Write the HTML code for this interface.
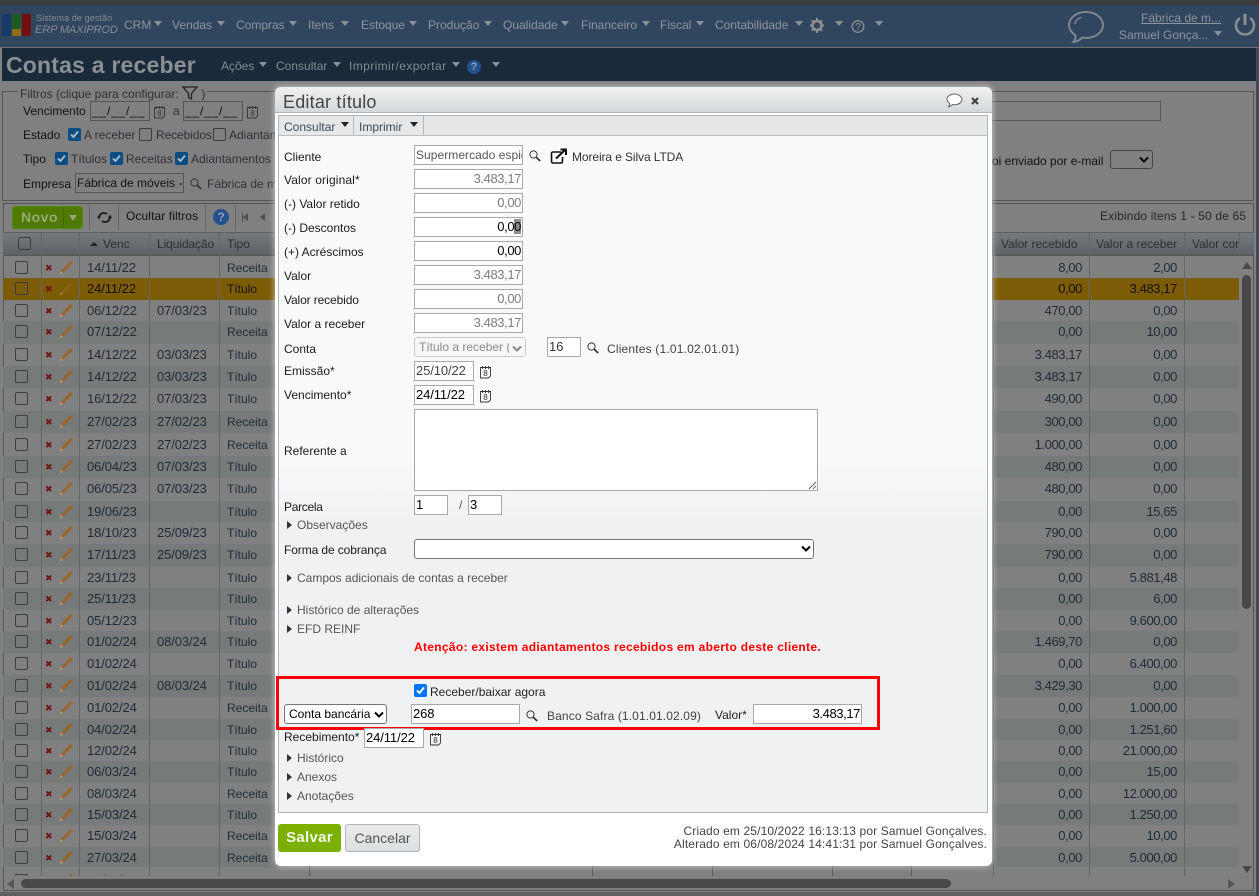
<!DOCTYPE html>
<html lang="pt-BR">
<head>
<meta charset="utf-8">
<title>Contas a receber</title>
<style>
html,body{margin:0;padding:0;width:1259px;height:896px;overflow:hidden;background:#808080}
body{position:relative;font:12px/14px "Liberation Sans",Arial,sans-serif;color:#1d2329}
.a,.a *{box-sizing:border-box}
.a{position:absolute}
.t{position:absolute;white-space:nowrap}
.m{position:absolute;top:18px;color:#8e969e;white-space:nowrap}
.tri{position:absolute;top:21px;width:0;height:0;border-left:4.5px solid transparent;border-right:4.5px solid transparent;border-top:5px solid #8a9197}
.tb{position:absolute;width:0;height:0;border-left:4.5px solid transparent;border-right:4.5px solid transparent;border-top:5px solid #222}
.dk{box-sizing:border-box;border:1px solid #555;background:transparent;position:absolute}
.ck{position:absolute;width:13px;height:13px;border-radius:2px;background:#0a4d85;color:#8f9a9f}
.un{box-sizing:border-box;position:absolute;width:13px;height:13px;border-radius:2px;border:1px solid #3c3c3c}
#rows{position:absolute;left:3px;top:256px;width:1236px;height:620px;overflow:hidden}
.r{position:absolute;left:0;width:1236px;height:22px;color:#1f2a38}
.r.e{background:#767a78}
.r.h{background:#7d5c07;color:#15110a}
.r.h svg{opacity:.55}
.r i{box-sizing:border-box;position:absolute;left:12px;top:4px;width:13px;height:13px;border:1px solid #3e3e3e;border-radius:2px}
.r b{position:absolute;left:42px;top:5px;color:#701418;font:bold 9px/14px "DejaVu Sans",sans-serif}
.r svg{position:absolute;left:56px;top:3px;width:14px;height:15px}
.r s{position:absolute;top:4px;text-decoration:none;white-space:nowrap}
.d,.l{font-size:13px;letter-spacing:-.1px}
.d{left:84px}.l{left:154px}.p{left:224px}
.v,.w{font-size:13px;letter-spacing:-.4px;text-align:right}
.v{left:979px;width:100px}
.w{left:1074px;width:100px}
.vl{position:absolute;top:233px;width:1px;height:643px;background:#636668}
.vs{position:absolute;top:866px;width:1px;height:10px;background:#5a5c5e}
.hd{position:absolute;top:237px;color:#2a2e33;white-space:nowrap}
#dlg{position:absolute;left:275px;top:87px;width:717px;height:779px;background:#fff;border-radius:6px;box-shadow:0 0 6px 1px rgba(225,225,225,.65)}
.f{box-sizing:border-box;position:absolute;height:20px;border:1px solid #a9a9a9;background:#fff;font:12px/18px "Liberation Sans",Arial,sans-serif;padding:0 1px;color:#000;white-space:nowrap;overflow:hidden}
.g{font-size:13px;letter-spacing:-.1px}
.n{text-align:right;color:#7d7d7d;font-size:13px;letter-spacing:-.4px}
.nb{text-align:right;color:#000;font-size:13px;letter-spacing:-.4px}
.lb{position:absolute;left:284px;white-space:nowrap;color:#1a1a1a}
.ar{position:absolute;width:0;height:0;border-top:4px solid transparent;border-bottom:4px solid transparent;border-left:5px solid #333}
.ex{position:absolute;left:297px;white-space:nowrap;color:#555}
.sel{box-sizing:border-box;position:absolute;height:20px;border:1px solid #767676;border-radius:3px;background:#fff;color:#000;padding:2px 4px;white-space:nowrap;overflow:hidden}
</style>
</head>
<body>
<svg width="0" height="0" style="position:absolute">
<symbol id="pen" viewBox="0 0 14 15"><path d="M.8 14.300L2 11 11.500 1l2.200 2L4 13z" fill="#9c6428"/><path d="M.8 14.300L2 11l2 2z" fill="#b3a288"/></symbol>
<symbol id="cal" viewBox="0 0 13 14"><path d="M1.500 2.500h10v8.500l-2 2h-8z" fill="none" stroke="#333" stroke-width=".9"/><path d="M3.500 1v3M6.500 1v3M9.500 1v3" stroke="#333" stroke-width=".9"/><text x="6.500" y="11" font-size="8" text-anchor="middle" fill="#333" font-family="Liberation Sans">8</text></symbol>
<symbol id="mag" viewBox="0 0 12 12"><circle cx="4.500" cy="4.500" r="3.600" fill="none" stroke="#333" stroke-width="1"/><path d="M7.200 7.200l4 3.800" stroke="#333" stroke-width="1.700"/></symbol>
<symbol id="chk" viewBox="0 0 13 13"><path d="M3 6.500l2.500 2.500 4.500-5.500" fill="none" stroke="#a9b4bb" stroke-width="2"/></symbol>
<symbol id="chev" viewBox="0 0 10 7"><path d="M1 1.500l4 4 4-4" fill="none" stroke="#000" stroke-width="2"/></symbol>
</svg>

<!-- top bars -->
<div class="a" style="left:0;top:0;width:1259px;height:5px;background:#3c3c3c"></div>
<div class="a" style="left:0;top:5px;width:1259px;height:42px;background:#30455e"></div>
<div class="a" style="left:2px;top:14px;width:9px;height:22px;background:#173a68;border-radius:2px 0 0 2px"></div>
<div class="a" style="left:12px;top:14px;width:9px;height:15px;background:#1e5a22"></div>
<div class="a" style="left:12px;top:29px;width:9px;height:7px;background:#8a6d15"></div>
<div class="a" style="left:22px;top:14px;width:9px;height:22px;background:#701010;border-radius:0 2px 2px 0"></div>
<div class="t" style="left:36px;top:11px;font-size:9px;letter-spacing:.1px;color:#858c93">Sistema de gestão</div>
<div class="t" style="left:35px;top:23px;font-size:11px;font-style:italic;color:#858c93;letter-spacing:-.1px">ERP MAXIPROD</div>
<div class="m" style="left:124px">CRM</div><div class="tri" style="left:154px"></div>
<div class="m" style="left:172px">Vendas</div><div class="tri" style="left:217px"></div>
<div class="m" style="left:236px">Compras</div><div class="tri" style="left:289px"></div>
<div class="m" style="left:308px">Itens</div><div class="tri" style="left:341px"></div>
<div class="m" style="left:361px">Estoque</div><div class="tri" style="left:409px"></div>
<div class="m" style="left:428px">Produção</div><div class="tri" style="left:484px"></div>
<div class="m" style="left:503px">Qualidade</div><div class="tri" style="left:561px"></div>
<div class="m" style="left:581px">Financeiro</div><div class="tri" style="left:642px"></div>
<div class="m" style="left:660px">Fiscal</div><div class="tri" style="left:696px"></div>
<div class="m" style="left:715px">Contabilidade</div><div class="tri" style="left:795px"></div>
<svg class="a" style="left:809px;top:17px" width="16" height="17" viewBox="0 0 16 17"><circle cx="8" cy="8.500" r="4.500" fill="none" stroke="#8f8f8f" stroke-width="2.500"/><path d="M8 1v3M8 13v3M1 8.500h3M12 8.500h3M2.800 3.300l2.200 2.200M11 11.500l2.200 2.200M13.200 3.300L11 5.500M5 11.500l-2.200 2.200" stroke="#8f8f8f" stroke-width="2"/></svg>
<div class="tri" style="left:835px"></div>
<svg class="a" style="left:851px;top:19px" width="14" height="15" viewBox="0 0 14 15"><circle cx="7" cy="7.500" r="5.800" fill="none" stroke="#8f8f8f" stroke-width="1.300"/><text x="7" y="11" font-size="10" text-anchor="middle" fill="#8f8f8f" font-family="Liberation Sans">?</text></svg>
<div class="tri" style="left:875px"></div>
<svg class="a" style="left:1067px;top:10px" width="38" height="34" viewBox="0 0 38 34"><path d="M19 2C9.500 2 2 8 2 15c0 4.500 3 8 6.500 10.500C9 28 8 30 6.500 32c4-.5 7-2.500 9-4.500 1 .2 2.500.5 3.500.5 9.500 0 17-6 17-13S28.500 2 19 2z" fill="none" stroke="#7e868e" stroke-width="2"/><path d="M8 14c0-3 3-5.500 6-6.500" fill="none" stroke="#7e868e" stroke-width="1.500"/></svg>
<div class="t" style="left:1141px;top:11px;color:#8e969e;text-decoration:underline">Fábrica de m...</div>
<div class="t" style="left:1119px;top:28px;color:#8e969e">Samuel Gonça...</div>
<div class="tri" style="left:1214px;top:31px"></div>
<svg class="a" style="left:1234px;top:12px" width="22" height="25" viewBox="0 0 22 25"><path d="M6 6a9 9 0 1 0 10 0" fill="none" stroke="#8a8f94" stroke-width="2.500"/><path d="M11 2v11" stroke="#8a8f94" stroke-width="3"/></svg>

<div class="a" style="left:0;top:47px;width:1259px;height:1px;background:#6f6f6f"></div>
<div class="a" style="left:2px;top:48px;width:1254px;height:33px;background:#1a2a3a"></div>
<div class="t" style="left:6px;top:52px;font:bold 23px/26px 'Liberation Sans',Arial,sans-serif;letter-spacing:.2px;color:#8a8f94">Contas a receber</div>
<div class="t" style="left:221px;top:59px;color:#858c93">Ações</div><div class="tri" style="left:259px;top:62px"></div>
<div class="t" style="left:276px;top:59px;color:#858c93">Consultar</div><div class="tri" style="left:333px;top:62px"></div>
<div class="t" style="left:349px;top:59px;letter-spacing:.4px;color:#858c93">Imprimir/exportar</div><div class="tri" style="left:452px;top:62px"></div>
<div class="a" style="left:467px;top:60px;width:14px;height:14px;border-radius:50%;background:#24508c;color:#8fa5c0;text-align:center;font:bold 11px/14px 'Liberation Sans',sans-serif">?</div>
<div class="tri" style="left:492px;top:62px"></div>

<!-- filters -->
<div class="dk" style="left:2px;top:91px;width:1252px;height:110px"></div>
<div class="t" style="left:18px;top:86px;background:#808080;padding:0 2px;color:#2d3136">Filtros (clique para configurar: <svg width="16" height="14" viewBox="0 0 16 14" style="vertical-align:-2px"><path d="M1 1h14L9.500 7.500V13L6.500 11.500v-4z" fill="none" stroke="#222" stroke-width="1.300"/></svg> )</div>
<div class="t" style="left:23px;top:104px;color:#111">Vencimento</div>
<div class="dk" style="left:90px;top:101px;width:60px;height:20px;color:#111;line-height:18px;padding-left:1px;letter-spacing:.8px;white-space:nowrap">__/__/__</div>
<svg class="a" style="left:153px;top:105px" width="13" height="14"><use href="#cal"/></svg>
<div class="t" style="left:173px;top:104px;color:#2d3136">a</div>
<div class="dk" style="left:183px;top:101px;width:60px;height:20px;color:#111;line-height:18px;padding-left:1px;letter-spacing:.8px;white-space:nowrap">__/__/__</div>
<svg class="a" style="left:246px;top:105px" width="13" height="14"><use href="#cal"/></svg>
<div class="dk" style="left:980px;top:101px;width:181px;height:20px"></div>

<div class="t" style="left:23px;top:128px;color:#111">Estado</div>
<div class="ck" style="left:68px;top:128px"><svg width="13" height="13"><use href="#chk"/></svg></div>
<div class="t" style="left:84px;top:128px;color:#2d3136">A receber</div>
<div class="un" style="left:139px;top:128px"></div>
<div class="t" style="left:156px;top:128px;color:#2d3136;letter-spacing:-.1px">Recebidos</div>
<div class="un" style="left:213px;top:128px"></div>
<div class="t" style="left:229px;top:128px;color:#2d3136;width:46px;overflow:hidden">Adiantamentos</div>

<div class="t" style="left:23px;top:152px;color:#111">Tipo</div>
<div class="ck" style="left:55px;top:152px"><svg width="13" height="13"><use href="#chk"/></svg></div>
<div class="t" style="left:71px;top:152px;color:#2d3136">Títulos</div>
<div class="ck" style="left:110px;top:152px"><svg width="13" height="13"><use href="#chk"/></svg></div>
<div class="t" style="left:126px;top:152px;color:#2d3136">Receitas</div>
<div class="ck" style="left:175px;top:152px"><svg width="13" height="13"><use href="#chk"/></svg></div>
<div class="t" style="left:191px;top:152px;color:#2d3136">Adiantamentos</div>

<div class="t" style="left:23px;top:177px;color:#111">Empresa</div>
<div class="dk" style="left:75px;top:173px;width:109px;height:20px;color:#111;line-height:18px;padding-left:1px;overflow:hidden;white-space:nowrap">Fábrica de móveis - </div>
<svg class="a" style="left:190px;top:178px" width="12" height="12"><use href="#mag"/></svg>
<div class="t" style="left:207px;top:177px;color:#2d3136;width:68px;overflow:hidden">Fábrica de móveis</div>
<div class="t" style="left:992px;top:154px;color:#111">oi enviado por e-mail</div>
<div class="dk" style="left:1110px;top:150px;width:43px;height:19px;border-color:#444;border-radius:3px"></div>
<svg class="a" style="left:1139px;top:156px" width="10" height="7"><use href="#chev"/></svg>

<!-- grid toolbar -->
<div class="dk" style="left:3px;top:203px;width:1251px;height:688px"></div>
<div class="a" style="left:12px;top:206px;width:71px;height:23px;background:#4e7a00;border-radius:3px;border:1px solid #5a8a05"></div>
<div class="t" style="left:21px;top:209px;font:bold 14px/17px 'Liberation Sans',sans-serif;color:#99a876;letter-spacing:.5px">Novo</div>
<div class="a" style="left:63px;top:207px;width:1px;height:21px;background:#436600"></div>
<div class="a" style="left:69px;top:215px;width:0;height:0;border-left:4px solid transparent;border-right:4px solid transparent;border-top:6px solid #98a878"></div>
<div class="a" style="left:89px;top:205px;width:1px;height:26px;background:#676767"></div>
<svg class="a" style="left:97px;top:211px" width="15" height="13" viewBox="0 0 15 13"><path d="M2 7C2 4 4 2 7 2c1.500 0 2.500.5 3 1" fill="none" stroke="#1b1b1b" stroke-width="1.700"/><path d="M0 5.500h4L2 8.500z" fill="#1b1b1b"/><path d="M13 6C13 9 11 11 8 11c-1.500 0-2.500-.5-3-1" fill="none" stroke="#1b1b1b" stroke-width="1.700"/><path d="M11 7h4l-2-3.500z" fill="#1b1b1b"/></svg>
<div class="a" style="left:118px;top:205px;width:1px;height:26px;background:#676767"></div>
<div class="t" style="left:126px;top:209px;color:#111;letter-spacing:.1px">Ocultar filtros</div>
<div class="a" style="left:205px;top:205px;width:1px;height:26px;background:#676767"></div>
<div class="a" style="left:213px;top:209px;width:16px;height:16px;border-radius:50%;background:#24508c;color:#8fa5c0;text-align:center;font:bold 12px/16px 'Liberation Sans',sans-serif">?</div>
<div class="a" style="left:235px;top:205px;width:1px;height:26px;background:#676767"></div>
<div class="a" style="left:242px;top:213px;width:1px;height:9px;background:#4e4e4e"></div>
<div class="a" style="left:243px;top:213px;border-top:4.500px solid transparent;border-bottom:4.500px solid transparent;border-right:5px solid #4e4e4e"></div>
<div class="a" style="left:260px;top:213px;border-top:4.500px solid transparent;border-bottom:4.500px solid transparent;border-right:5px solid #4e4e4e"></div>
<div class="t" style="left:1100px;top:209px;color:#26262c;letter-spacing:.15px">Exibindo itens 1 - 50 de 65</div>

<!-- header -->
<div class="a" style="left:3px;top:232px;width:1251px;height:24px;background:linear-gradient(#777a7c,#5e6165);border-top:1px solid #5e5e5e;border-bottom:1px solid #565656"></div>
<div class="un" style="left:18px;top:237px"></div>
<div class="a" style="left:90px;top:242px;width:0;height:0;border-left:4px solid transparent;border-right:4px solid transparent;border-bottom:4px solid #222"></div>
<div class="hd" style="left:103px">Venc</div>
<div class="hd" style="left:157px;letter-spacing:-.1px">Liquidação</div>
<div class="hd" style="left:227px">Tipo</div>
<div class="hd" style="left:1001px">Valor recebido</div>
<div class="hd" style="left:1096px">Valor a receber</div>
<div class="hd" style="left:1192px;width:47px;overflow:hidden">Valor correção</div>

<!-- rows -->
<div id="rows">
<div class="r" style="top:1px"><i></i><b>✖</b><svg><use href="#pen"/></svg><s class="d">14/11/22</s><s class="p">Receita</s><s class="v">8,00</s><s class="w">2,00</s></div>
<div class="r h" style="top:22px"><i></i><b>✖</b><svg><use href="#pen"/></svg><s class="d">24/11/22</s><s class="p">Título</s><s class="v">0,00</s><s class="w">3.483,17</s></div>
<div class="r" style="top:44px"><i></i><b>✖</b><svg><use href="#pen"/></svg><s class="d">06/12/22</s><s class="l">07/03/23</s><s class="p">Título</s><s class="v">470,00</s><s class="w">0,00</s></div>
<div class="r e" style="top:65px;height:23px"><i></i><b>✖</b><svg><use href="#pen"/></svg><s class="d">07/12/22</s><s class="p">Receita</s><s class="v">0,00</s><s class="w">10,00</s></div>
<div class="r" style="top:88px"><i></i><b>✖</b><svg><use href="#pen"/></svg><s class="d">14/12/22</s><s class="l">03/03/23</s><s class="p">Título</s><s class="v">3.483,17</s><s class="w">0,00</s></div>
<div class="r e" style="top:110px"><i></i><b>✖</b><svg><use href="#pen"/></svg><s class="d">14/12/22</s><s class="l">03/03/23</s><s class="p">Título</s><s class="v">3.483,17</s><s class="w">0,00</s></div>
<div class="r" style="top:132px"><i></i><b>✖</b><svg><use href="#pen"/></svg><s class="d">16/12/22</s><s class="l">07/03/23</s><s class="p">Título</s><s class="v">490,00</s><s class="w">0,00</s></div>
<div class="r e" style="top:155px"><i></i><b>✖</b><svg><use href="#pen"/></svg><s class="d">27/02/23</s><s class="l">27/02/23</s><s class="p">Receita</s><s class="v">300,00</s><s class="w">0,00</s></div>
<div class="r" style="top:178px"><i></i><b>✖</b><svg><use href="#pen"/></svg><s class="d">27/02/23</s><s class="l">27/02/23</s><s class="p">Receita</s><s class="v">1.000,00</s><s class="w">0,00</s></div>
<div class="r e" style="top:200px"><i></i><b>✖</b><svg><use href="#pen"/></svg><s class="d">06/04/23</s><s class="l">07/03/23</s><s class="p">Título</s><s class="v">480,00</s><s class="w">0,00</s></div>
<div class="r" style="top:222px"><i></i><b>✖</b><svg><use href="#pen"/></svg><s class="d">06/05/23</s><s class="l">07/03/23</s><s class="p">Título</s><s class="v">480,00</s><s class="w">0,00</s></div>
<div class="r e" style="top:245px;height:21px"><i></i><b>✖</b><svg><use href="#pen"/></svg><s class="d">19/06/23</s><s class="p">Título</s><s class="v">0,00</s><s class="w">15,65</s></div>
<div class="r" style="top:266px"><i></i><b>✖</b><svg><use href="#pen"/></svg><s class="d">18/10/23</s><s class="l">25/09/23</s><s class="p">Título</s><s class="v">790,00</s><s class="w">0,00</s></div>
<div class="r e" style="top:288px;height:23px"><i></i><b>✖</b><svg><use href="#pen"/></svg><s class="d">17/11/23</s><s class="l">25/09/23</s><s class="p">Título</s><s class="v">790,00</s><s class="w">0,00</s></div>
<div class="r" style="top:311px"><i></i><b>✖</b><svg><use href="#pen"/></svg><s class="d">23/11/23</s><s class="p">Título</s><s class="v">0,00</s><s class="w">5.881,48</s></div>
<div class="r e" style="top:332px"><i></i><b>✖</b><svg><use href="#pen"/></svg><s class="d">25/11/23</s><s class="p">Título</s><s class="v">0,00</s><s class="w">6,00</s></div>
<div class="r" style="top:354px"><i></i><b>✖</b><svg><use href="#pen"/></svg><s class="d">05/12/23</s><s class="p">Título</s><s class="v">0,00</s><s class="w">9.600,00</s></div>
<div class="r e" style="top:375px"><i></i><b>✖</b><svg><use href="#pen"/></svg><s class="d">01/02/24</s><s class="l">08/03/24</s><s class="p">Título</s><s class="v">1.469,70</s><s class="w">0,00</s></div>
<div class="r" style="top:397px"><i></i><b>✖</b><svg><use href="#pen"/></svg><s class="d">01/02/24</s><s class="p">Título</s><s class="v">0,00</s><s class="w">6.400,00</s></div>
<div class="r e" style="top:419px"><i></i><b>✖</b><svg><use href="#pen"/></svg><s class="d">01/02/24</s><s class="l">08/03/24</s><s class="p">Título</s><s class="v">3.429,30</s><s class="w">0,00</s></div>
<div class="r" style="top:441px"><i></i><b>✖</b><svg><use href="#pen"/></svg><s class="d">01/02/24</s><s class="p">Receita</s><s class="v">0,00</s><s class="w">1.000,00</s></div>
<div class="r e" style="top:463px;height:21px"><i></i><b>✖</b><svg><use href="#pen"/></svg><s class="d">04/02/24</s><s class="p">Título</s><s class="v">0,00</s><s class="w">1.251,60</s></div>
<div class="r" style="top:484px"><i></i><b>✖</b><svg><use href="#pen"/></svg><s class="d">12/02/24</s><s class="p">Título</s><s class="v">0,00</s><s class="w">21.000,00</s></div>
<div class="r e" style="top:505px"><i></i><b>✖</b><svg><use href="#pen"/></svg><s class="d">06/03/24</s><s class="p">Título</s><s class="v">0,00</s><s class="w">15,00</s></div>
<div class="r" style="top:527px"><i></i><b>✖</b><svg><use href="#pen"/></svg><s class="d">08/03/24</s><s class="p">Receita</s><s class="v">0,00</s><s class="w">12.000,00</s></div>
<div class="r e" style="top:548px;height:21px"><i></i><b>✖</b><svg><use href="#pen"/></svg><s class="d">15/03/24</s><s class="p">Título</s><s class="v">0,00</s><s class="w">1.250,00</s></div>
<div class="r" style="top:569px"><i></i><b>✖</b><svg><use href="#pen"/></svg><s class="d">15/03/24</s><s class="p">Receita</s><s class="v">0,00</s><s class="w">10,00</s></div>
<div class="r e" style="top:591px;height:20px"><i></i><b>✖</b><svg><use href="#pen"/></svg><s class="d">27/03/24</s><s class="p">Receita</s><s class="v">0,00</s><s class="w">5.000,00</s></div>
<div class="r" style="top:614px"><i></i><b>✖</b><svg><use href="#pen"/></svg><s class="d">30/03/24</s><s class="p">Receita</s><s style="left:315px">ADANIS GRATTO BORSOI ME - f. Receita</s><s class="v" style="left:600px">7.500,00</s><s class="v" style="left:700px">7.500,00</s><s class="v" style="left:880px">7.500,00</s><s class="v">0,00</s><s class="w">7.500,00</s></div>
</div>
<div class="vl" style="left:41px"></div>
<div class="vl" style="left:79px"></div>
<div class="vl" style="left:149px"></div>
<div class="vl" style="left:219px"></div>
<div class="vl" style="left:993px"></div>
<div class="vl" style="left:1089px"></div>
<div class="vl" style="left:1184px"></div>
<div class="vs" style="left:309px"></div>
<div class="vs" style="left:592px"></div>
<div class="vs" style="left:712px"></div>
<div class="vs" style="left:832px"></div>
<div class="vs" style="left:911px"></div>
<div class="a" style="left:1239px;top:233px;width:1px;height:23px;background:#636668"></div>

<!-- scrollbars -->
<div class="a" style="left:1242px;top:262px;width:0;height:0;border-left:5px solid transparent;border-right:5px solid transparent;border-bottom:7px solid #484848"></div>
<div class="a" style="left:1242px;top:275px;width:9px;height:334px;background:#484848;border-radius:5px"></div>
<div class="a" style="left:1242px;top:866px;width:0;height:0;border-left:5px solid transparent;border-right:5px solid transparent;border-top:7px solid #484848"></div>
<div class="a" style="left:7px;top:879px;width:0;height:0;border-top:5px solid transparent;border-bottom:5px solid transparent;border-right:7px solid #555"></div>
<div class="a" style="left:21px;top:879px;width:930px;height:9px;background:#484848;border-radius:5px"></div>
<div class="a" style="left:1228px;top:879px;width:0;height:0;border-top:5px solid transparent;border-bottom:5px solid transparent;border-left:7px solid #555"></div>
<div class="a" style="left:0;top:892px;width:1259px;height:4px;background:#5f6062"></div>
<div class="a" style="left:1256px;top:48px;width:3px;height:848px;background:#3d4a5c"></div>

<!-- dialog -->
<div id="dlg"></div>
<div class="a" style="left:275px;top:87px;width:717px;height:26px;background:linear-gradient(#eff0f1,#d5d9db);border-radius:6px 6px 0 0;border-bottom:1px solid #aeb4b8"></div>
<div class="t" style="left:283px;top:93px;font-size:18px;line-height:19px;letter-spacing:.2px;color:#444">Editar título</div>
<svg class="a" style="left:946px;top:93px" width="17" height="15" viewBox="0 0 17 15"><path d="M8.500 1C4.500 1 1 3.300 1 6.300c0 1.800 1.200 3.200 2.800 4.200 0 1.200-.5 2.200-1.300 3.200 1.800-.2 3.200-1.200 4.200-2.200.6.100 1.200.2 1.800.2 4 0 7.500-2.300 7.500-5.200S12.500 1 8.500 1z" fill="#fff" stroke="#666"/></svg>
<svg class="a" style="left:971px;top:97px" width="8" height="8" viewBox="0 0 8 8"><path d="M1 1l6 6M7 1L1 7" stroke="#444" stroke-width="2.200"/></svg>

<div class="a" style="left:278px;top:115px;width:710px;height:698px;border:1px solid #aeb4b8;background:linear-gradient(#f9fafa 0,#f8f9f9 50%,#f0f1f3 58%,#f0f1f3 100%)"></div>
<div class="a" style="left:279px;top:116px;width:708px;height:20px;background:#e5e7e9;border-bottom:1px solid #b9bdc0"></div>
<div class="t" style="left:284px;top:120px;color:#3a4a5a">Consultar</div><div class="tb" style="left:341px;top:122px"></div>
<div class="a" style="left:353px;top:116px;width:1px;height:20px;background:#b5b9bc"></div>
<div class="t" style="left:359px;top:120px;color:#3a4a5a">Imprimir</div><div class="tb" style="left:410px;top:122px"></div>
<div class="a" style="left:423px;top:116px;width:1px;height:20px;background:#b5b9bc"></div>

<div class="lb" style="top:150px">Cliente</div>
<div class="f" style="left:414px;top:145px;width:109px;color:#555;letter-spacing:.05px">Supermercado espigão</div>
<svg class="a" style="left:529px;top:150px" width="12" height="12"><use href="#mag"/></svg>
<svg class="a" style="left:550px;top:148px" width="17" height="16" viewBox="0 0 17 16"><path d="M11 4H3a1.500 1.500 0 0 0-1.500 1.500v8A1.500 1.500 0 0 0 3 15h8a1.500 1.500 0 0 0 1.500-1.500V9" fill="none" stroke="#111" stroke-width="1.600"/><path d="M6 10.500L15 2M10.500 1.500H16V7" fill="none" stroke="#111" stroke-width="2"/></svg>
<div class="t" style="left:572px;top:150px;color:#333;letter-spacing:-.1px">Moreira e Silva LTDA</div>

<div class="lb" style="top:173px;letter-spacing:.13px">Valor original*</div>
<div class="f n" style="left:414px;top:169px;width:109px">3.483,17</div>
<div class="lb" style="top:197px">(-) Valor retido</div>
<div class="f n" style="left:414px;top:193px;width:109px">0,00</div>
<div class="lb" style="top:221px">(-) Descontos</div>
<div class="f nb" style="left:414px;top:217px;width:109px">0,0<span style="background:#8e8e8e">0</span></div>
<div class="lb" style="top:245px">(+) Acréscimos</div>
<div class="f nb" style="left:414px;top:241px;width:109px">0,00</div>
<div class="lb" style="top:269px">Valor</div>
<div class="f n" style="left:414px;top:265px;width:109px">3.483,17</div>
<div class="lb" style="top:293px;letter-spacing:-.12px">Valor recebido</div>
<div class="f n" style="left:414px;top:289px;width:109px">0,00</div>
<div class="lb" style="top:317px">Valor a receber</div>
<div class="f n" style="left:414px;top:313px;width:109px">3.483,17</div>

<div class="lb" style="top:342px">Conta</div>
<div class="a" style="left:414px;top:337px;width:112px;height:20px;border:1px solid #c8c8c8;border-radius:3px;background:#f5f6f6;color:#8a8a8a;padding:2px 4px;white-space:nowrap;overflow:hidden">Título a receber (</div>
<div class="a" style="left:509px;top:338px;width:16px;height:18px;background:#f5f6f6"></div>
<svg class="a" style="left:512px;top:345px;opacity:.45" width="10" height="7"><use href="#chev"/></svg>
<div class="f g" style="left:547px;top:337px;width:34px;color:#333">16</div>
<svg class="a" style="left:587px;top:342px" width="12" height="12"><use href="#mag"/></svg>
<div class="t" style="left:607px;top:342px;color:#444;letter-spacing:.18px">Clientes (1.01.02.01.01)</div>

<div class="lb" style="top:364px">Emissão*</div>
<div class="f g" style="left:414px;top:361px;width:60px;color:#444">25/10/22</div>
<svg class="a" style="left:479px;top:365px" width="13" height="14"><use href="#cal"/></svg>
<div class="lb" style="top:388px">Vencimento*</div>
<div class="f g" style="left:414px;top:385px;width:60px">24/11/22</div>
<svg class="a" style="left:479px;top:389px" width="13" height="14"><use href="#cal"/></svg>
<div class="lb" style="top:444px">Referente a</div>
<div class="f" style="left:414px;top:409px;width:404px;height:82px"></div>
<svg class="a" style="left:808px;top:481px" width="9" height="9"><path d="M1 8L8 1M5 8l3-3" stroke="#666"/></svg>

<div class="lb" style="top:500px;letter-spacing:-.3px">Parcela</div>
<div class="f g" style="left:414px;top:495px;width:34px">1</div>
<div class="t" style="left:459px;top:498px;color:#555">/</div>
<div class="f g" style="left:468px;top:495px;width:34px">3</div>
<div class="ar" style="left:287px;top:521px"></div><div class="ex" style="top:518px">Observações</div>
<div class="lb" style="top:543px;letter-spacing:-.1px">Forma de cobrança</div>
<div class="sel" style="left:414px;top:539px;width:400px"></div>
<svg class="a" style="left:801px;top:545px" width="10" height="7"><use href="#chev"/></svg>
<div class="ar" style="left:287px;top:574px"></div><div class="ex" style="top:571px">Campos adicionais de contas a receber</div>
<div class="ar" style="left:287px;top:606px"></div><div class="ex" style="top:603px">Histórico de alterações</div>
<div class="ar" style="left:287px;top:625px"></div><div class="ex" style="top:622px">EFD REINF</div>
<div class="t" style="left:414px;top:640px;font-weight:bold;letter-spacing:.3px;color:#f00">Atenção: existem adiantamentos recebidos em aberto deste cliente.</div>

<div class="a" style="left:414px;top:684px;width:13px;height:13px;border-radius:2px;background:#0075ff"><svg width="13" height="13" style="display:block"><path d="M3 6.500l2.500 2.500 4.500-5.500" fill="none" stroke="#fff" stroke-width="2"/></svg></div>
<div class="t" style="left:430px;top:685px;color:#222">Receber/baixar agora</div>
<div class="sel" style="left:284px;top:704px;width:103px">Conta bancária</div>
<svg class="a" style="left:374px;top:711px" width="10" height="7"><use href="#chev"/></svg>
<div class="f g" style="left:411px;top:704px;width:109px">268</div>
<svg class="a" style="left:526px;top:710px" width="12" height="12"><use href="#mag"/></svg>
<div class="t" style="left:547px;top:709px;color:#444;letter-spacing:.12px">Banco Safra (1.01.01.02.09)</div>
<div class="t" style="left:715px;top:708px;color:#222">Valor*</div>
<div class="f nb" style="left:753px;top:704px;width:109px">3.483,17</div>
<div class="a" style="left:276px;top:676px;width:604px;height:54px;border:3px solid #f00"></div>

<div class="lb" style="top:730px">Recebimento*</div>
<div class="f g" style="left:364px;top:728px;width:60px">24/11/22</div>
<svg class="a" style="left:429px;top:732px" width="13" height="14"><use href="#cal"/></svg>
<div class="ar" style="left:287px;top:754px"></div><div class="ex" style="top:751px">Histórico</div>
<div class="ar" style="left:287px;top:773px"></div><div class="ex" style="top:770px">Anexos</div>
<div class="ar" style="left:287px;top:792px"></div><div class="ex" style="top:789px">Anotações</div>

<div class="a" style="left:278px;top:824px;width:63px;height:28px;background:#7cb000;border-radius:3px;color:#f2f6e6;text-align:center;font:bold 15px/28px 'Liberation Sans',sans-serif;letter-spacing:.3px">Salvar</div>
<div class="a" style="left:345px;top:824px;width:75px;height:28px;background:linear-gradient(#e9ebec,#dcdfe1);border:1px solid #b0b4b7;border-radius:3px;color:#555;text-align:center;font:14px/26px 'Liberation Sans',sans-serif">Cancelar</div>
<div class="t" style="right:272px;top:824px;color:#444;text-align:right;letter-spacing:.13px">Criado em 25/10/2022 16:13:13 por Samuel Gonçalves.</div>
<div class="t" style="right:272px;top:837px;color:#444;text-align:right;letter-spacing:.13px">Alterado em 06/08/2024 14:41:31 por Samuel Gonçalves.</div>
</body>
</html>
